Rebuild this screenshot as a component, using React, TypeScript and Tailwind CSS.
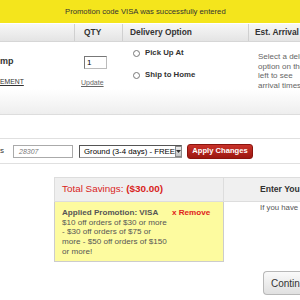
import React from "react";

export default function App() {
  return (
    <div className="w-[300px] h-[300px] overflow-hidden bg-white font-['Liberation_Sans',Arial,sans-serif] text-[#333]">
      {/* Banner */}
      <div className="h-[23px] bg-[#f4e51c] flex items-center pl-[65px] text-[7.7px] text-[#333] whitespace-nowrap">
        Promotion code VISA was successfully entered
      </div>
      {/* Table header */}
      <div className="mt-px h-[18px] flex bg-gradient-to-b from-[#f7f7f7] to-[#e4e4e4] border-b border-[#d6d6d6] text-[8.4px] font-bold text-[#333] whitespace-nowrap">
        <div className="w-[75px] shrink-0 border-r border-[#d0d0d0]" />
        <div className="w-[48px] shrink-0 border-r border-[#d0d0d0] pl-[9px] flex items-center">QTY</div>
        <div className="w-[126px] shrink-0 border-r border-[#d0d0d0] pl-[7px] flex items-center">Delivery Option</div>
        <div className="flex-1 min-w-0 pl-[6px] flex items-center">Est. Arrival</div>
      </div>
      {/* Product row */}
      <div className="h-[73px] flex bg-gradient-to-b from-white from-[65%] to-[#eeeeee] border-b border-[#dddddd]">
        <div className="w-[75px] shrink-0 flex flex-col">
          <div className="pt-[14px] leading-[11px] text-[9px] font-bold text-[#333]">mp</div>
          <div className="mt-[10px] leading-[9px] text-[6.8px] underline text-[#333]">EMENT</div>
        </div>
        <div className="w-[48px] shrink-0 flex flex-col">
          <div className="mt-[14px] ml-[9px] w-[23px] h-[13px] border border-[#777] border-r-[#bbb] border-b-[#bbb] bg-white text-[8px] leading-[11px] pl-[2px] text-black">1</div>
          <div className="mt-[9px] ml-[6px] leading-[9px] text-[7px] underline text-[#666]">Update</div>
        </div>
        <div className="w-[126px] shrink-0 flex flex-col pt-[6px] pl-[10px] text-[7.8px] font-bold text-[#333] whitespace-nowrap">
          <div className="flex items-center gap-[5px] h-[10px]">
            <span className="w-[7px] h-[7px] rounded-full border border-[#777] bg-white" />
            <span>Pick Up At</span>
          </div>
          <div className="mt-[12px] flex items-center gap-[5px] h-[10px]">
            <span className="w-[7px] h-[7px] rounded-full border border-[#777] bg-white" />
            <span>Ship to Home</span>
          </div>
        </div>
        <div className="flex-1 min-w-0 pt-[10px] pl-[9px] text-[8px] leading-[9.7px] text-[#666] whitespace-nowrap">
          Select a deli
          <br />
          option on the
          <br />
          left to see
          <br />
          arrival times
        </div>
      </div>
      {/* spacer */}
      <div className="h-[23px]" />
      {/* Zip row */}
      <div className="h-[26px] border-t border-b border-[#e0e0e0] flex items-center whitespace-nowrap">
        <div className="w-[13px] shrink-0 text-[8px] text-[#333]">s</div>
        <div className="w-[60px] shrink-0 h-[13px] border border-[#aaa] bg-white text-[7px] italic text-[#777] leading-[11px] pl-[5px]">28307</div>
        <div className="ml-[6px] w-[103px] shrink-0 h-[13px] border border-[#555] border-r-[#999] border-b-[#999] bg-white flex items-center">
          <span className="flex-1 pl-[4px] text-[7.8px] text-black leading-[11px]">Ground (3-4 days) - FREE</span>
          <span className="w-[10px] h-[11px] mr-px bg-gradient-to-b from-[#eeeeee] to-[#c4c4c4] border border-[#888] flex items-center justify-center">
            <svg width="5" height="3" viewBox="0 0 5 3"><path d="M0 0h5L2.5 3z" fill="#333" /></svg>
          </span>
        </div>
        <div className="ml-[5px] w-[66px] shrink-0 h-[15px] rounded-[3px] bg-gradient-to-b from-[#c9322a] to-[#9c1710] border border-[#8a140e] flex items-center justify-center text-[7.6px] font-bold text-white">
          Apply Changes
        </div>
      </div>
      {/* Boxes */}
      <div className="mt-[13px] flex">
        <div className="ml-[54px] w-[170px] shrink-0 flex flex-col">
          <div className="h-[25px] bg-[#efefef] border border-[#dddddd] flex items-center pl-[7px] text-[9.9px] text-[#d9251d] whitespace-nowrap">
            Total Savings:&nbsp;<span className="font-bold">($30.00)</span>
          </div>
          <div className="h-[60px] bg-[#fdfb9f] border border-t-0 border-[#cccccc] flex pt-[6px] pl-[7px] text-[8.1px] leading-[9.7px] text-[#555] whitespace-nowrap">
            <div className="w-[110px] shrink-0">
              <span className="font-bold">Applied Promotion: VISA</span>
              <br />
              $10 off orders of $30 or more
              <br />
              - $30 off orders of $75 or
              <br />
              more - $50 off orders of $150
              <br />
              or more!
            </div>
            <div className="font-bold text-[#e0201a]">x Remove</div>
          </div>
        </div>
        <div className="flex-1 min-w-0 flex flex-col">
          <div className="h-[25px] bg-[#f0f0f0] border-t border-b border-[#dddddd] flex items-center pl-[36px] text-[8.6px] font-bold text-[#333] whitespace-nowrap">
            Enter You
          </div>
          <div className="pt-px pl-[36px] text-[7.8px] leading-[9px] text-[#555] whitespace-nowrap">If you have</div>
        </div>
      </div>
      {/* Continue */}
      <div className="mt-[9px] ml-[263px] w-[37px] h-[24px] rounded-l-[4px] border border-r-0 border-[#b8b8b8] bg-gradient-to-b from-[#fafafa] to-[#e0e0e0] flex items-center pl-[7px] text-[10px] text-[#333] whitespace-nowrap">
        Contin
      </div>
    </div>
  );
}
